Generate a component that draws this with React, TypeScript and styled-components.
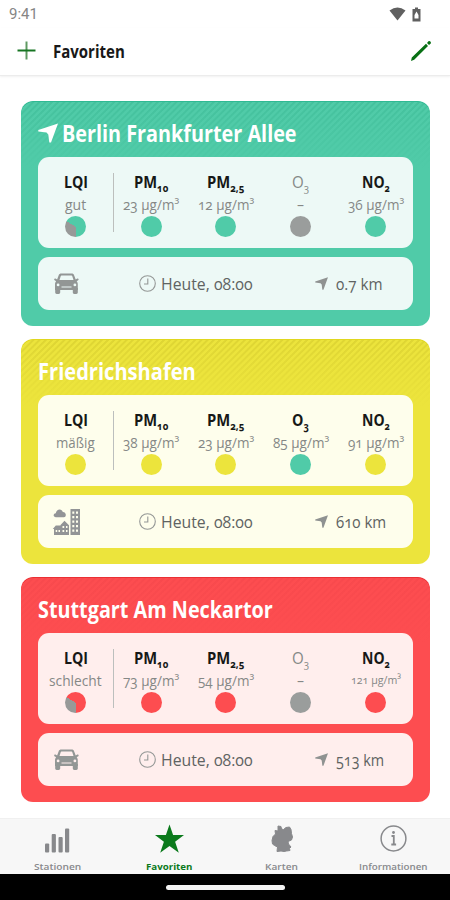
import React, { useLayoutEffect, useRef, useState } from "react";
import styled, { createGlobalStyle, css } from "styled-components";

const Global = createGlobalStyle`
  * { box-sizing: border-box; }
  body { margin: 0; background: #fff; }
`;

const Screen = styled.div`
  width: 450px;
  height: 900px;
  display: flex;
  flex-direction: column;
  overflow: hidden;
  background: #fff;
  font-family: "Open Sans", "Noto Sans", sans-serif;
  font-variant-numeric: oldstyle-nums;
  color: #1a1a1a;
`;

const FitBox = styled.span<{ $width: number }>`
  display: block;
  flex: none;
  width: ${(p) => p.$width}px;
  white-space: nowrap;
`;

const FitInner = styled.span`
  display: inline-block;
  transform-origin: 0 50%;
`;

/* Condenses a line of text horizontally to a fixed width. */
function Fit({ width, children }: { width: number; children: React.ReactNode }) {
  const ref = useRef<HTMLSpanElement>(null);
  const [scale, setScale] = useState(1);
  useLayoutEffect(() => {
    if (ref.current) setScale(width / ref.current.offsetWidth);
  }, [width]);
  return (
    <FitBox $width={width}>
      <FitInner ref={ref} style={{ transform: `scaleX(${scale})` }}>{children}</FitInner>
    </FitBox>
  );
}

const StatusBar = styled.div`
  height: 28px;
  flex: none;
  display: flex;
  align-items: center;
  justify-content: space-between;
  padding: 0 29px 0 9px;
  font: 400 15.5px/28px Roboto, sans-serif;
  font-variant-numeric: lining-nums;
  color: #858585;
`;

const StatusIcons = styled.div`
  display: flex;
  gap: 6px;
  align-items: center;
  svg { display: block; }
`;

const Header = styled.header`
  height: 48px;
  flex: none;
  display: flex;
  align-items: center;
  padding: 0 18px 2px 17px;
  border-bottom: 1px solid #ececec;
  box-shadow: 0 1px 2px rgba(0, 0, 0, 0.06);
  svg { display: block; }
`;

const HeaderTitle = styled.h1`
  flex: 1;
  margin: 1px 0 0 17px;
  font-size: 17.5px;
  line-height: 24px;
  font-weight: 700;
  color: #181818;
`;

const List = styled.main`
  flex: 1;
  min-height: 0;
  display: flex;
  flex-direction: column;
  gap: 13px;
  padding: 25px 20px 0 21px;
`;

const Card = styled.section<{ $color: string; $edge: string; $stripe: string }>`
  height: 225px;
  flex: none;
  padding: 0 17px;
  border-radius: 12px;
  background:
    linear-gradient(to bottom, transparent, ${(p) => p.$color} 68px),
    repeating-linear-gradient(135deg, ${(p) => p.$stripe} 0 1.2px, ${(p) => p.$color} 2px 3.6px, ${(p) => p.$stripe} 4.4px);
  background-color: ${(p) => p.$color};
  box-shadow: inset 0 1px 0 ${(p) => p.$edge};
`;

const CardTitle = styled.h2`
  height: 56px;
  margin: 0;
  padding: 7px 0 0;
  display: flex;
  align-items: center;
  gap: 4px;
  font-size: 23px;
  line-height: 32px;
  font-weight: 700;
  color: #fff;
  svg { display: block; }
`;

const panel = css<{ $tint: string }>`
  border-radius: 11px;
  background: ${(p) => p.$tint};
`;

const Measurements = styled.div<{ $tint: string }>`
  ${panel}
  height: 91px;
  display: grid;
  grid-template-columns: 75px 1px 74px repeat(3, 75px);
  align-items: start;
`;

const Divider = styled.i`
  height: 59px;
  margin-top: 16px;
  background: #bcbfbd;
`;

const Cell = styled.div`
  padding-top: 14px;
  display: flex;
  flex-direction: column;
  align-items: center;
`;

const Label = styled.div<{ $muted?: boolean }>`
  height: 23px;
  font-size: 16px;
  line-height: 22px;
  font-weight: ${(p) => (p.$muted ? 500 : 700)};
  color: ${(p) => (p.$muted ? "#858987" : "#161817")};
  sub { font-size: 10.5px; line-height: 0; vertical-align: -4px; }
`;

const Value = styled.div<{ $small?: boolean }>`
  height: 22px;
  font-size: ${(p) => (p.$small ? 11.5 : 14)}px;
  line-height: ${(p) => (p.$small ? 19 : 22)}px;
  color: #858886;
`;

const Dot = styled.div<{ $color: string; $partial?: boolean }>`
  width: 21px;
  height: 21px;
  border-radius: 50%;
  background: ${(p) => p.$partial
    ? `conic-gradient(${p.$color} 0 180deg, #979998 180deg 300deg, ${p.$color} 300deg)`
    : p.$color};
`;

const Info = styled.div<{ $tint: string }>`
  ${panel}
  height: 53px;
  margin-top: 9px;
  display: grid;
  grid-template-columns: 101px 176px 1fr;
  align-items: center;
  font-size: 16.5px;
  line-height: 24px;
  color: #606362;
  svg { display: block; }
`;

const Place = styled.div` padding-left: 14px; `;

const InfoItem = styled.div<{ $gap: number }>`
  display: flex;
  align-items: center;
  gap: ${(p) => p.$gap}px;
`;

const Nav = styled.nav`
  height: 56px;
  flex: none;
  display: grid;
  grid-template-columns: repeat(4, 1fr);
  padding-left: 1px;
  border-top: 1px solid #f0f0f0;
  background: #f7f7f7;
`;

const NavItem = styled.div<{ $active?: boolean }>`
  display: flex;
  flex-direction: column;
  align-items: center;
  padding-top: 5px;
  color: ${(p) => (p.$active ? "#0b7a1c" : "#88898c")};
  font-size: 9.5px;
  line-height: 13px;
  font-weight: ${(p) => (p.$active ? 700 : 600)};
  svg { display: block; margin-bottom: 5px; }
`;

const HomeArea = styled.footer`
  height: 26px;
  flex: none;
  display: flex;
  justify-content: center;
  align-items: center;
  background: #000;
`;

const HomeBar = styled.i`
  width: 119px;
  height: 5px;
  border-radius: 3px;
  background: #f3f3f3;
`;

const Arrow = ({ size, color }: { size: number; color: string }) => (
  <svg width={size} height={size} viewBox="0 0 20 20" fill={color}>
    <path d="M20 .5 13 19.500H11.300L10.300 11.500 8.500 9.500.300 8.500.300 7Z" />
  </svg>
);

const Clock = () => (
  <svg width="17" height="17" viewBox="0 0 17 17" fill="none" stroke="#949796" strokeWidth="1.1">
    <circle cx="8.5" cy="8.5" r="7.8" />
    <path d="M8.800 3.500V9H5" />
  </svg>
);

const Car = () => (
  <svg width="30" height="28" viewBox="0 0 30 28" fill="#929695">
    <path fillRule="evenodd" d="M9.500 3.500h10c1.500 0 2.300.6 2.700 2l1.500 4 1.600-.9c1.500-.3 1.800 1.500.5 2l-1.100.6c.8.8 1.100 1.900 1.100 3.400v5.400H3v-5.400c0-1.500.3-2.600 1.100-3.400L3 10.600c-1.300-.5-1-2.300.5-2l1.600.9 1.500-4c.4-1.400 1.400-2 2.900-2Zm.4 1.900c-.8 0-1 .2-1.200.9L7.500 9.900h14l-1.200-3.600c-.2-.7-.4-.9-1.200-.9ZM6.100 13.500a1.400 1.400 0 1 0 0 2.800 1.400 1.400 0 0 0 0-2.800Zm16.800 0a1.400 1.400 0 1 0 0 2.800 1.400 1.400 0 0 0 0-2.800ZM9.500 16.500h10v1h-10Z" />
    <path d="M3.200 18h5v4.500c0 2-5 2-5 0ZM20.800 18h5v4.500c0 2-5 2-5 0Z" />
  </svg>
);

const City = () => (
  <svg width="30" height="28" viewBox="0 0 30 28" fill="#929496">
    <path d="M4 9.200c-3 0-3.200-3.500-.2-3.900C4.300.6 10 .2 10.800 4c3.500-.2 4.200 5.200 1 5.200Z" />
    <path fillRule="evenodd" d="M18.500 1H28v26h-9.500ZM20.300 3.500v2.300h2V3.500Zm3.700 0v2.300h2V3.500ZM20.300 8v2.300h2V8ZM24 8v2.300h2V8Zm-3.700 4.500v2.300h2v-2.300Zm3.700 0v2.300h2v-2.300ZM20.300 17v2.300h2V17ZM24 17v2.300h2V17Zm-3.700 4.500v2.300h2v-2.300Zm3.700 0v2.300h2v-2.300Z" />
    <path fillRule="evenodd" d="m8.500 17 4-4.200 4.500 4.500V27H2v-6H.8l3-3.500h4.700ZM10.500 18v2h1.700v-2Zm3.500 0v2h1.500v-2Zm-3.500 4v2h1.700v-2Zm3.500 0v2h1.500v-2ZM3.700 22v2h1.500v-2ZM6.500 22v2H8v-2Z" />
  </svg>
);

const Stations = () => (
  <svg width="30" height="31" viewBox="0 0 30 31" fill="#88898c">
    <rect x="3" y="19.500" width="4.200" height="9" rx="1" />
    <rect x="9.700" y="10" width="4.200" height="18.500" rx="1" />
    <rect x="16.500" y="13" width="4.200" height="15.500" rx="1" />
    <rect x="23" y="4.500" width="4.200" height="24" rx="1" />
  </svg>
);

const Star = () => (
  <svg width="31" height="31" viewBox="0 0 31 31" fill="#0b7a1c">
    <path d="m15.500.500 3.600 10.600H30l-8.900 6.700 3.700 11-9.300-6.700-9.300 6.700 3.700-11L1 11.100h10.900Z" />
  </svg>
);

const Germany = () => (
  <svg width="30" height="31" viewBox="0 0 30 31" fill="#88898c">
    <path stroke="#88898c" strokeWidth="1" strokeLinejoin="round" d="m11 2 3 .5.500 2.500 2 .5L19 3.500l3.500-.5 1.500 2.500.5 4 1 3.500-1 3-3.500 1.500.5 2.500 2.500 3-1.500 1.500.5 2-3.500.5-2.500.5-3-.5-4 .5.500-4.500-3-1.500L5.500 20 5 16.500l1-4L8.500 10 8 6.500l3 .5Z" />
  </svg>
);

const InfoIcon = () => (
  <svg width="29" height="31" viewBox="0 0 29 31" fill="none" stroke="#88898c" strokeWidth="1.500">
    <circle cx="14.500" cy="14.500" r="12.400" />
    <path strokeWidth="1.800" d="M12.500 12h2.300v8.300M12.300 20.500h4.800" />
    <circle cx="14.500" cy="8.500" r="1.400" fill="#88898c" stroke="none" />
  </svg>
);

const GREEN = "#50cba8";
const YELLOW = "#ece43c";
const RED = "#fd4d50";
const GREY = "#9a9d9c";

type Reading = { value: string; color: string; small?: boolean };
type Station = {
  name: string; width: number; near?: boolean; color: string; edge: string; stripe: string; tint: string;
  index: string; indexWidth: number; partial?: boolean; readings: Reading[];
  city?: boolean; distance: string; distanceWidth: number;
};

const pollutants = [
  { name: "PM", sub: "10", width: 34 },
  { name: "PM", sub: "2,5", width: 37 },
  { name: "O", sub: "3", width: 17 },
  { name: "NO", sub: "2", width: 28 },
];

const stations: Station[] = [
  {
    name: "Berlin Frankfurter Allee", width: 235, near: true, color: GREEN, edge: "#2fb993", stripe: "#44c19d", tint: "#edf9f6",
    index: "gut", indexWidth: 21, partial: true,
    readings: [{ value: "23 µg/m³", color: GREEN }, { value: "12 µg/m³", color: GREEN }, { value: "–", color: GREY }, { value: "36 µg/m³", color: GREEN }],
    distance: "0.7 km", distanceWidth: 47,
  },
  {
    name: "Friedrichshafen", width: 158, color: YELLOW, edge: "#e0d71f", stripe: "#ded533", tint: "#fefeec",
    index: "mäßig", indexWidth: 39,
    readings: [{ value: "38 µg/m³", color: YELLOW }, { value: "23 µg/m³", color: YELLOW }, { value: "85 µg/m³", color: GREEN }, { value: "91 µg/m³", color: YELLOW }],
    city: true, distance: "610 km", distanceWidth: 50,
  },
  {
    name: "Stuttgart Am Neckartor", width: 235, color: RED, edge: "#ea3034", stripe: "#f8494d", tint: "#ffeeed",
    index: "schlecht", indexWidth: 53, partial: true,
    readings: [{ value: "73 µg/m³", color: RED }, { value: "54 µg/m³", color: RED }, { value: "–", color: GREY }, { value: "121 µg/m³", color: RED, small: true }],
    distance: "513 km", distanceWidth: 48,
  },
];

function StationCard({ s }: { s: Station }) {
  return (
    <Card $color={s.color} $edge={s.edge} $stripe={s.stripe}>
      <CardTitle>
        {s.near && <Arrow size={20} color="#fff" />}
        <Fit width={s.width}>{s.name}</Fit>
      </CardTitle>
      <Measurements $tint={s.tint}>
        <Cell>
          <Label><Fit width={24}>LQI</Fit></Label>
          <Value><Fit width={s.indexWidth}>{s.index}</Fit></Value>
          <Dot $color={s.color} $partial={s.partial} />
        </Cell>
        <Divider />
        {pollutants.map((p, i) => {
          const r = s.readings[i];
          const none = r.value === "–";
          return (
            <Cell key={p.name + p.sub}>
              <Label $muted={none}><Fit width={p.width}>{p.name}<sub>{p.sub}</sub></Fit></Label>
              <Value $small={r.small}><Fit width={none ? 7 : r.small ? 50 : 56}>{r.value}</Fit></Value>
              <Dot $color={r.color} />
            </Cell>
          );
        })}
      </Measurements>
      <Info $tint={s.tint}>
        <Place>{s.city ? <City /> : <Car />}</Place>
        <InfoItem $gap={5}><Clock /><Fit width={92}>Heute, 08:00</Fit></InfoItem>
        <InfoItem $gap={8}><Arrow size={13} color="#8f9291" /><Fit width={s.distanceWidth}>{s.distance}</Fit></InfoItem>
      </Info>
    </Card>
  );
}

export default function App() {
  return (
    <Screen>
      <Global />
      <StatusBar>
        <Fit width={29}>9:41</Fit>
        <StatusIcons>
          <svg width="17" height="14" viewBox="0 0 17 14" fill="#606060"><path d="M.5 3.500Q8.500-2.500 16.500 3.500L8.500 13.500Z" /></svg>
          <svg width="9" height="15" viewBox="0 0 9 15" fill="#606060"><path fillRule="evenodd" d="M3 .5h3V2h2.500v12.500H.5V2H3ZM4.500 4.500 2.500 8v3.500h4V8Z" /></svg>
        </StatusIcons>
      </StatusBar>
      <Header>
        <svg width="19" height="19" viewBox="0 0 19 19" fill="none" strokeWidth="2"><path stroke="#5f9a62" d="M9.500.5v18" /><path stroke="#167422" d="M.5 9.500h18" /></svg>
        <HeaderTitle><Fit width={72}>Favoriten</Fit></HeaderTitle>
        <svg width="22" height="22" viewBox="0 0 22 22" fill="#087014"><path d="m1 21 .8-3.500L16 3.800 18 5.900 4.200 19.700ZM17 3l1.500-1.800c1.200-.8 3 .8 2.300 2.200L19 5Z" /></svg>
      </Header>
      <List>{stations.map((s) => <StationCard key={s.name} s={s} />)}</List>
      <Nav>
        <NavItem><Stations /><Fit width={47}>Stationen</Fit></NavItem>
        <NavItem $active><Star /><Fit width={46}>Favoriten</Fit></NavItem>
        <NavItem><Germany /><Fit width={33}>Karten</Fit></NavItem>
        <NavItem><InfoIcon /><Fit width={69}>Informationen</Fit></NavItem>
      </Nav>
      <HomeArea><HomeBar /></HomeArea>
    </Screen>
  );
}
